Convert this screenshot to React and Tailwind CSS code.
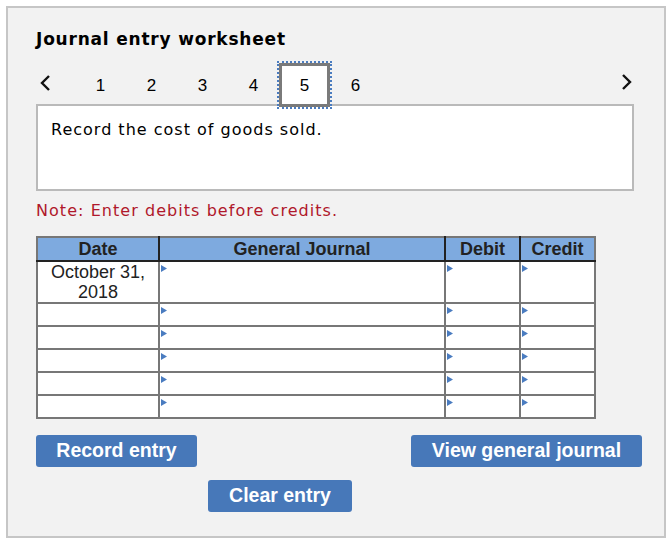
import React from 'react';

const verdana = { fontFamily: '"DejaVu Sans", Verdana, sans-serif' };

// little blue marker in the top-left corner of the editable cells
function Marker() {
  return (
    <svg className="absolute left-[1px] top-[3px]" width="6" height="7" viewBox="0 0 6 7">
      <path d="M0 0 L6 3.5 L0 7 Z" fill="#4a7cc0" />
    </svg>
  );
}

function Chevron({ dir }) {
  const d = dir === 'left' ? 'M9 1 L2 8 L9 15' : 'M2 1 L9 8 L2 15';
  return (
    <svg width="11" height="16" viewBox="0 0 11 16">
      <path d={d} fill="none" stroke="#111" strokeWidth="2.4" />
    </svg>
  );
}

export default function App() {
  const tabs = [1, 2, 3, 4, 5, 6];
  const rows = [1, 2, 3, 4, 5, 6];

  return (
    <div className="w-[672px] h-[540px] bg-white pt-[6px] pl-[6px]">
      <div className="w-[660px] h-[532px] border-2 border-[#c6c6c6] bg-[#f2f2f2] pl-[28px] pr-[22px] pt-[19px]">
        <h1 className="text-[17px] leading-[24px] font-bold text-black tracking-[0.8px]" style={verdana}>
          Journal entry worksheet
        </h1>

        {/* step navigation */}
        <div className="mt-[12px] flex items-start h-[44px] w-[600px] font-['Liberation_Sans',Arial,sans-serif]">
          <button className="w-[39px] h-[30px] flex items-center justify-start pl-[4px] mt-[5px]">
            <Chevron dir="left" />
          </button>
          {tabs.map(n => (
            <div
              key={n}
              className={`w-[51px] h-[44px] flex items-center justify-center text-[17px] text-black ${n === 5 ? 'bg-white border-[3px] border-[#7a7a7a] outline-2 outline-dotted outline-[#4a7cc0] z-10 relative' : ''}`}
            >
              <span className="mt-[2px]">{n}</span>
            </div>
          ))}
          <div className="flex-1" />
          <button className="h-[30px] flex items-center mt-[4px] mr-[4px]">
            <Chevron dir="right" />
          </button>
        </div>

        {/* question */}
        <div className="-mt-[3px] w-[598px] h-[87px] border-2 border-[#bababa] bg-white pl-[13px] pt-[14px]">
          <p className="text-[16px] leading-[20px] text-black tracking-[1px]" style={verdana}>Record the cost of goods sold.</p>
        </div>

        <p className="mt-[10px] text-[16px] leading-[20px] text-[#b0182b] tracking-[1.05px]" style={verdana}>
          Note: Enter debits before credits.
        </p>

        {/* journal table */}
        <table className="mt-[15px] w-[560px] table-fixed border-collapse border-2 border-[#777] font-['Liberation_Sans',Arial,sans-serif] text-[18px] text-[#222]">
          <colgroup>
            <col className="w-[122px]" />
            <col className="w-[286px]" />
            <col className="w-[75px]" />
            <col className="w-[75px]" />
          </colgroup>
          <thead>
            <tr className="h-[24px] bg-[#7eaadf] border-b-2 border-[#222]">
              <th className="border-r-2 border-[#222] font-bold leading-[18px] p-0">Date</th>
              <th className="border-r-2 border-[#222] font-bold leading-[18px] p-0">General Journal</th>
              <th className="border-r-2 border-[#222] font-bold leading-[18px] p-0">Debit</th>
              <th className="font-bold leading-[18px] p-0">Credit</th>
            </tr>
          </thead>
          <tbody>
            {rows.map(r => (
              <tr key={r} className={`${r === 1 ? 'h-[41px]' : 'h-[23px]'} bg-white border-t-2 border-[#777]`}>
                <td className="border-r-2 border-[#777] p-0 text-center align-top leading-[20px]">
                  {r === 1 ? (
                    <div>October 31,<br />2018</div>
                  ) : null}
                </td>
                <td className="relative border-r-2 border-[#777] p-0"><Marker /></td>
                <td className="relative border-r-2 border-[#777] p-0"><Marker /></td>
                <td className="relative p-0"><Marker /></td>
              </tr>
            ))}
          </tbody>
        </table>

        {/* actions */}
        <div className="mt-[16px] flex justify-between font-['Liberation_Sans',Arial,sans-serif]">
          <button className="w-[161px] h-[32px] rounded-[3px] bg-[#4778b9] text-white font-bold text-[19.5px]">
            Record entry
          </button>
          <button className="w-[231px] h-[32px] rounded-[3px] bg-[#4778b9] text-white font-bold text-[19.5px]">
            View general journal
          </button>
        </div>
        <div className="mt-[13px] pl-[172px] font-['Liberation_Sans',Arial,sans-serif]">
          <button className="w-[144px] h-[32px] rounded-[3px] bg-[#4778b9] text-white font-bold text-[19.5px]">
            Clear entry
          </button>
        </div>
      </div>
    </div>
  );
}
